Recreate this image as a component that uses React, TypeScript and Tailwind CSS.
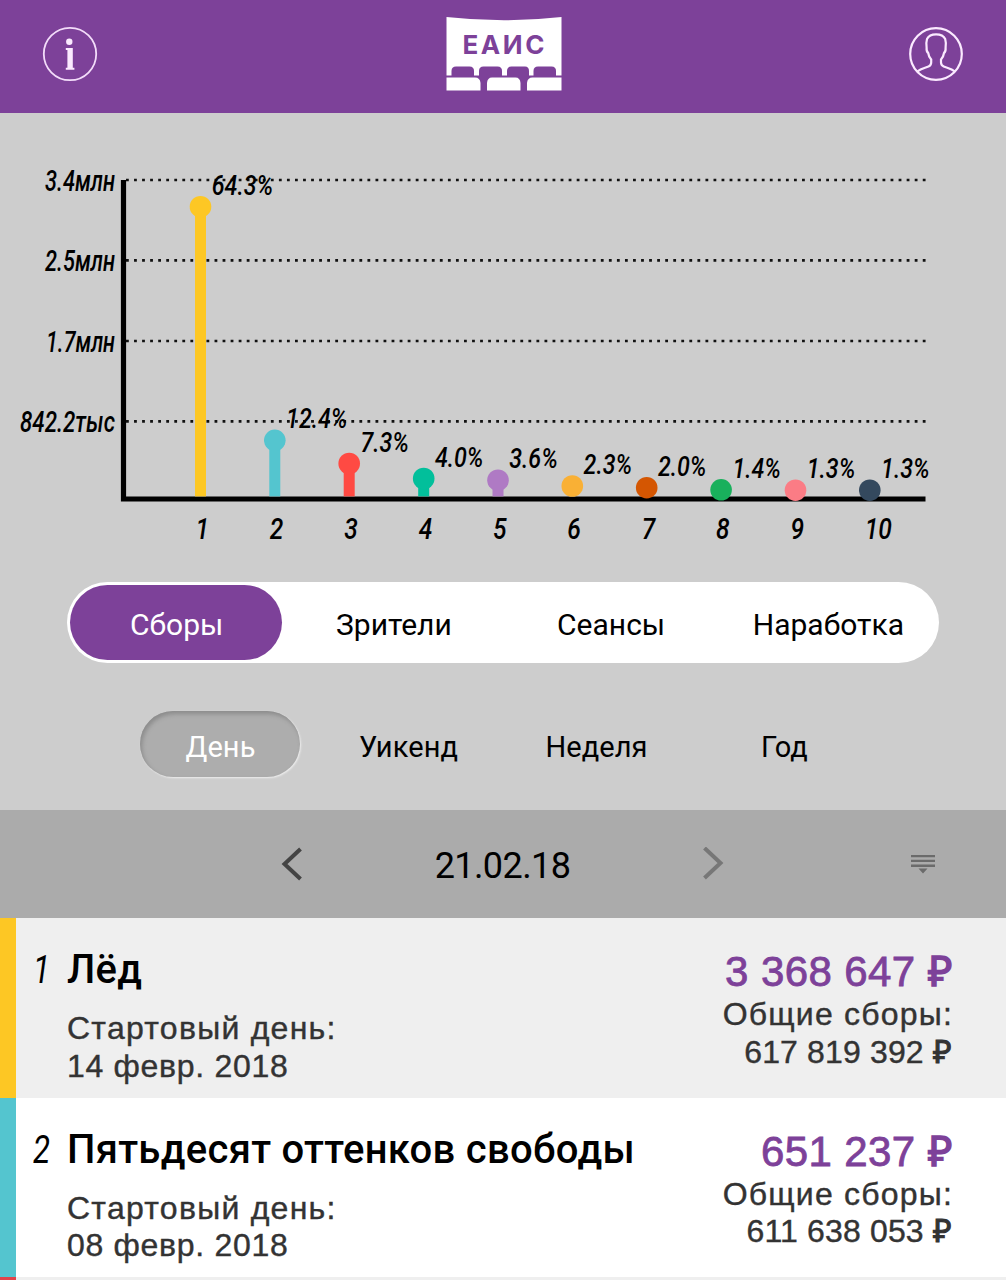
import { useState } from "react";

interface Point {
  x: number;
  y: number;
  percent: string;
  color: string;
}

interface Movie {
  place: number;
  title: string;
  start: string;
  day: string;
  total: string;
  stripe: string;
}

const points: Point[] = [
  { x: 200.5, y: 93.7, percent: "64.3%", color: "#fdc724" },
  { x: 274.8, y: 327.3, percent: "12.4%", color: "#54c5cf" },
  { x: 349.2, y: 350.5, percent: "7.3%", color: "#ff4a43" },
  { x: 423.7, y: 365.5, percent: "4.0%", color: "#02bf9b" },
  { x: 498, y: 367.2, percent: "3.6%", color: "#af7ac4" },
  { x: 572.3, y: 373, percent: "2.3%", color: "#f9b035" },
  { x: 646.7, y: 374.7, percent: "2.0%", color: "#d45602" },
  { x: 721.1, y: 376.8, percent: "1.4%", color: "#19b05c" },
  { x: 795.5, y: 377.2, percent: "1.3%", color: "#fb7c85" },
  { x: 869.8, y: 377.2, percent: "1.3%", color: "#34495e" },
];

const gridLines = [
  { y: 67, label: "3.4млн", width: 70 },
  { y: 147.4, label: "2.5млн", width: 70 },
  { y: 228, label: "1.7млн", width: 69 },
  { y: 308.4, label: "842.2тыс", width: 95 },
];

const movies: Movie[] = [
  {
    place: 1,
    title: "Лёд",
    start: "14 февр. 2018",
    day: "3 368 647",
    total: "617 819 392",
    stripe: "bg-[#fdc724]",
  },
  {
    place: 2,
    title: "Пятьдесят оттенков свободы",
    start: "08 февр. 2018",
    day: "651 237",
    total: "611 638 053",
    stripe: "bg-[#54c5cf]",
  },
];

const metrics = ["Сборы", "Зрители", "Сеансы", "Наработка"];
const periods = ["День", "Уикенд", "Неделя", "Год"];

const Logo = () => (
  <svg width="116" height="74" viewBox="0 0 116 74">
    <path d="M0.5 0Q58 6.5 115.5 0V58.5H0.5Z" fill="#fff" />
    <g fill="#7d4199">
      <path d="M5.5 62V54Q5.5 49.5 10 49.5H23.5Q28 49.5 28 54V62Z" />
      <path d="M33 62V54Q33 49.5 37.5 49.5H51.5Q56 49.5 56 54V62Z" />
      <path d="M61 62V54Q61 49.5 65.5 49.5H79Q83 49.5 83 54V62Z" />
      <path d="M87.5 62V54Q87.5 49.5 92 49.5H105.5Q110 49.5 110 54V62Z" />
    </g>
    <g fill="#fff">
      <path d="M0.5 73.5V60.5H29Q34 60.5 34.5 66V73.5Z" />
      <path d="M41 73.5V66Q41.5 60.5 46 60.5H69.5Q74 60.5 74.5 66V73.5Z" />
      <path d="M81 73.5V66Q81.5 60.5 86.5 60.5H115.5V73.5Z" />
    </g>
    <text
      x="16.5"
      y="37"
      textLength="82"
      className="font-['Inter'] text-[26px] font-bold"
      fill="#7d4199"
    >
      ЕАИС
    </text>
  </svg>
);

const InfoIcon = () => (
  <svg width="56" height="56" viewBox="0 0 56 56" fill="#fbeaff">
    <circle cx="28" cy="28" r="26.2" fill="none" stroke="#f3dcfa" strokeWidth="1.8" />
    <circle cx="27.3" cy="15.8" r="3.2" />
    <path d="M23.8 22H30.8V41.8H32.4V43.8H23.8V41.8H25.4V24H23.8Z" />
  </svg>
);

const ProfileIcon = () => (
  <svg width="56" height="56" viewBox="0 0 56 56" fill="none" stroke="#fbeaff" strokeWidth="2.2">
    <circle cx="28" cy="28" r="25.8" />
    <path d="M9.500 45.300C13 42.500 17 42 20.500 40.500C22.500 39.600 23.200 38.500 23.200 36.500V33.500C21.500 31.500 20.500 29.500 20.200 27C18.800 26 18.400 24 18.600 21.500C18.200 18 18.200 15.500 19 13C20.500 9.800 23.800 8.300 28.100 8.300S35.700 9.800 37.200 13C38 15.500 38 18 37.600 21.500C37.800 24 37.400 26 36 27C35.700 29.500 34.700 31.500 33 33.500V36.500C33 38.500 33.700 39.600 35.700 40.500C39.200 42 43.200 42.500 46.700 45.300" />
  </svg>
);

const Chart = () => (
  <svg
    width="1006"
    height="469"
    viewBox="0 0 1006 469"
    className="block font-['Roboto'] font-medium italic"
  >
    {gridLines.map((line) => (
      <g key={line.label}>
        <path d={`M126 ${line.y}H926`} stroke="#111" strokeWidth="2.6" strokeDasharray="2.8 5.248" />
        <text
          x={115 - line.width}
          y={line.y + 11}
          textLength={line.width}
          lengthAdjust="spacingAndGlyphs"
          className="text-[30px]"
        >
          {line.label}
        </text>
      </g>
    ))}
    {points.map((p, i) => (
      <g key={i}>
        <text
          transform={`translate(${p.x + 11.3} ${p.y - 12}) scale(0.83 1)`}
          className="text-[28px]"
        >
          {p.percent}
        </text>
        <text
          transform={`translate(${p.x - 5} 426) scale(0.82 1)`}
          className="text-[30px]"
        >
          {i + 1}
        </text>
      </g>
    ))}
    <path d="M123.5 67V386H925.5" fill="none" stroke="#000" strokeWidth="5.2" />
    {points.map((p, i) => (
      <g key={i} fill={p.color}>
        {p.y < 372 && <rect x={p.x - 5.5} y={p.y} width="11" height={383.4 - p.y} />}
        <circle cx={p.x} cy={p.y} r="10.8" />
      </g>
    ))}
  </svg>
);

export default function App() {
  const [metric, setMetric] = useState(metrics[0]);
  const [period, setPeriod] = useState(periods[0]);

  return (
    <div className="flex h-[1280px] w-[1006px] flex-col overflow-hidden bg-[#cdcdcd] font-['Roboto',sans-serif] text-black">
      <header className="flex h-[113px] shrink-0 items-start justify-between bg-[#7d4199] px-[42px]">
        <div className="pt-[26px]">
          <InfoIcon />
        </div>
        <div className="pt-[17px] pl-px">
          <Logo />
        </div>
        <div className="pt-[26px]">
          <ProfileIcon />
        </div>
      </header>

      <div className="shrink-0">
        <Chart />
      </div>

      {/* Metric switch */}
      <div className="ml-[67px] grid h-[81px] w-[872px] shrink-0 grid-cols-4 rounded-full bg-white p-[3px] pr-0">
        {metrics.map((m) => (
          <button
            key={m}
            onClick={() => setMetric(m)}
            className={`mr-[5px] rounded-full pt-1 pl-px text-[30px] leading-none ${m === metric ? "bg-[#7d4199] text-white" : ""}`}
          >
            {m}
          </button>
        ))}
      </div>

      {/* Period switch */}
      <div className="mt-12 ml-[126px] grid h-[66px] w-[752px] shrink-0 grid-cols-4">
        {periods.map((p) => (
          <button
            key={p}
            onClick={() => setPeriod(p)}
            className={`mx-[14px] rounded-full pt-1.5 pl-px text-[29px] leading-none tracking-[0.1px] ${p === period ? "bg-[#adadad] text-white shadow-[inset_2px_3px_4px_#8c8c8c,1px_1px_2px_#eee]" : ""}`}
          >
            {p}
          </button>
        ))}
      </div>

      <div className="mt-[33px] flex h-[108px] shrink-0 items-center bg-[#ababab] pl-[280px]">
        <svg width="24" height="34" viewBox="0 0 24 34" fill="none" stroke="#444" strokeWidth="4">
          <path d="M20.500 2L4.500 17L20.500 32" />
        </svg>
        <div className="w-[397px] pt-1 text-center text-[36px] tracking-[-0.6px]">21.02.18</div>
        <svg width="24" height="34" viewBox="0 0 24 34" fill="none" stroke="#777" strokeWidth="4">
          <path d="M3.500 1L19.500 16L3.500 31" />
        </svg>
        <svg width="26" height="22" viewBox="0 0 26 22" className="ml-[185px]" fill="#6b6b6b">
          <path d="M1 2H25V4.300H1ZM1 6.800H25V9.100H1ZM1 11.600H25V13.900H1ZM8.500 15.500H17.500L13 20.500Z" />
        </svg>
      </div>

      <div className="flex flex-col">
        {movies.map((movie) => (
          <div key={movie.place} className="flex h-[179.500px] shrink-0 odd:bg-[#efefef] even:bg-white">
            <div className={`w-4 ${movie.stripe}`} />
            <div className="w-[51px] pt-[30px] pl-[17px] text-[39px] leading-[44px] italic">
              <span className="inline-block origin-left scale-x-[0.8]">{movie.place}</span>
            </div>
            <div className="flex-1 pt-[30px] whitespace-nowrap">
              <div className="text-[40px] leading-[44px] font-medium tracking-[0.3px]">{movie.title}</div>
              <div className="mt-[18px] font-['Liberation_Sans',sans-serif] text-[32px] leading-[37.500px] text-[#333] [-webkit-text-stroke:0.4px_#333]">
                <div className="tracking-[1.25px]">Стартовый день:</div>
                <div className="tracking-[0.7px]">{movie.start}</div>
              </div>
            </div>
            <div className="pt-[30px] pr-[54px] text-right font-['Liberation_Sans',sans-serif] text-[32px] leading-[37.500px] whitespace-nowrap text-[#333] [-webkit-text-stroke:0.4px_#333]">
              <div className="text-[42px] leading-[48px] tracking-[0.4px] text-[#7d4199] [-webkit-text-stroke:0.8px_#7d4199]">
                {movie.day} <span className="[-webkit-text-stroke:1.600px_#7d4199]">₽</span>
              </div>
              <div className="-mr-px tracking-[1.2px]">Общие сборы:</div>
              <div className="tracking-[0.15px]">
                {movie.total} <span className="[-webkit-text-stroke:1.100px_#333]">₽</span>
              </div>
            </div>
          </div>
        ))}
        <div className="flex h-[179.500px] shrink-0 bg-[#efefef]">
          <div className="w-4 bg-[#e0444a]" />
        </div>
      </div>
    </div>
  );
}
